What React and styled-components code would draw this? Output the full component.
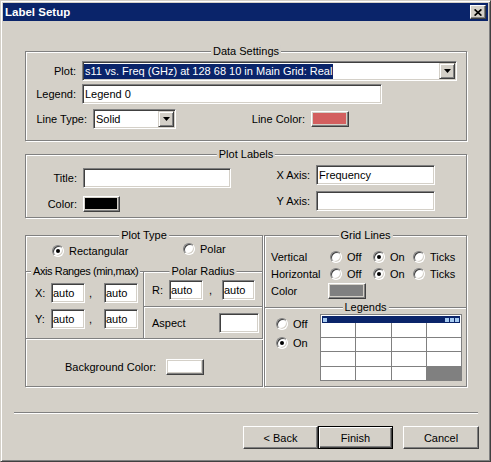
import React from 'react'
import styled, { createGlobalStyle } from 'styled-components'

const GlobalStyle = createGlobalStyle`
    html, body {
        margin: 0;
        padding: 0;
        background: #d4d0c8;
    }
    body {
        font-family: "Liberation Sans", Arial, sans-serif;
        font-size: 11px;
        color: #000;
    }
`

const Window = styled.div`
    width: 491px;
    height: 462px;
    box-sizing: border-box;
    padding: 2px;
    background: #d4d0c8;
    border: 1px solid;
    border-color: #d4d0c8 #404040 #404040 #d4d0c8;
    box-shadow: inset 1px 1px 0 #fff, inset -1px -1px 0 #808080;
    display: flex;
    flex-direction: column;
`
const TitleBar = styled.div`
    height: 18px;
    flex: none;
    display: flex;
    align-items: center;
    padding-left: 2px;
    background: #0a246a;
    color: #fff;
    font-weight: bold;
    font-size: 11.5px;
`
const CloseButton = styled.div`
    margin-left: auto;
    margin-right: 2px;
    width: 16px;
    height: 14px;
    box-sizing: border-box;
    background: #d4d0c8;
    border: 1px solid;
    border-color: #fff #404040 #404040 #fff;
    box-shadow: inset -1px -1px 0 #808080;
    display: flex;
    align-items: center;
    justify-content: center;
`
const Body = styled.div`
    padding: 30px 21px 0 22px;
    display: flex;
    flex-direction: column;
`

// etched frame used by every group box
const Group = styled.div`
    position: relative;
    box-sizing: border-box;
    flex: none;
    border: 1px solid #808080;
    box-shadow: inset 1px 1px 0 #fff, 1px 1px 0 #fff;
`
const GroupTitle = styled.span`
    position: absolute;
    top: -7px;
    left: ${p => p.$left ? '5px' : '50%'};
    transform: ${p => p.$left ? 'none' : 'translateX(-50%)'};
    padding: 0 2px;
    line-height: 13px;
    letter-spacing: ${p => p.$tight ? '-0.4px' : 'normal'};
    background: #d4d0c8;
    white-space: nowrap;
`

const DataBox = styled(Group)`
    height: 90px;
    padding-top: 9px;
    display: flex;
    flex-direction: column;
`
const LabelsBox = styled(Group)`
    height: 64px;
    margin-top: 13px;
    display: flex;
`
const LabelsColumn = styled.div`
    display: flex;
    flex-direction: column;
    gap: 6px;
    width: ${p => p.$w ? p.$w + 'px' : 'auto'};
    padding-top: ${p => p.$pt}px;
`
const BottomSection = styled.div`
    display: flex;
    height: 152px;
    margin-top: 17px;
`
const PlotTypeBox = styled(Group)`
    width: 238px;
    height: 152px;
    display: flex;
    flex-direction: column;
`
const TypeRow = styled.div`
    height: 35px;
    flex: none;
    box-sizing: border-box;
    display: flex;
    align-items: flex-start;
    padding: 8px 0 0 26px;
`
const RangeRow = styled.div`
    display: flex;
    height: 68px;
    flex: none;
    margin: 0 -1px;
`
const AxisBox = styled(Group)`
    width: 119px;
    height: 68px;
    padding: 11px 0 0 9px;
    display: flex;
    flex-direction: column;
    gap: 6px;
`
const RadiusColumn = styled.div`
    flex: 1;
    margin-left: -1px;
    display: flex;
    flex-direction: column;
`
const RadiusBox = styled(Group)`
    height: 36px;
    padding: 8px 0 0 8px;
`
const AspectBox = styled(Group)`
    height: 33px;
    margin-top: -1px;
    padding: 6px 3px 0 8px;
`
const BackgroundRow = styled.div`
    height: 47px;
    flex: none;
    box-sizing: border-box;
    display: flex;
    align-items: center;
    padding: 8px 0 0 39px;
`
const RightColumn = styled.div`
    width: 203px;
    margin-left: 1px;
    display: flex;
    flex-direction: column;
`
const GridLinesBox = styled(Group)`
    height: 73px;
    padding: 12px 0 0 6px;
    display: grid;
    grid-template-columns: 59px 43px 40px auto;
    grid-auto-rows: 17px;
    align-items: center;
    align-content: start;
`
const LegendsBox = styled(Group)`
    height: 80px;
    margin-top: -1px;
    padding: 6px 0 0 11px;
    display: flex;
`
const LegendChoices = styled.div`
    width: 44px;
    display: flex;
    flex-direction: column;
`

const Row = styled.div`
    display: flex;
    align-items: center;
    justify-content: ${p => p.$spread ? 'space-between' : 'flex-start'};
    height: 20px;
    flex: none;
    margin-top: ${p => p.$mt || 0}px;
`
const Label = styled.span`
    flex: none;
    width: ${p => p.$w ? p.$w + 'px' : 'auto'};
    margin-right: ${p => p.$gap ?? 6}px;
    text-align: ${p => p.$alignLeft ? 'left' : 'right'};
    white-space: nowrap;
`
const Comma = styled.span`
    flex: none;
    width: ${p => p.$w}px;
    box-sizing: border-box;
    padding-left: ${p => p.$pl}px;
`
const TextBox = styled.input`
    box-sizing: border-box;
    flex: none;
    width: ${p => p.$w}px;
    height: 20px;
    margin: 0;
    padding: 0 ${p => p.$pad ?? 2}px;
    border: 1px solid;
    border-color: #808080 #fff #fff #808080;
    box-shadow: inset 1px 1px 0 #404040, inset -1px -1px 0 #d4d0c8;
    background: #fff;
    font: 11px "Liberation Sans", Arial, sans-serif;
    color: #000;
    outline: none;
`
const Combo = styled.div`
    box-sizing: border-box;
    flex: none;
    width: ${p => p.$w}px;
    height: 20px;
    display: flex;
    align-items: center;
    padding-left: 1px;
    border: 1px solid;
    border-color: #808080 #fff #fff #808080;
    box-shadow: inset 1px 1px 0 #404040, inset -1px -1px 0 #d4d0c8;
    background: #fff;
    overflow: hidden;
`
const ComboText = styled.span`
    padding: 0 1px;
    line-height: 15px;
    white-space: nowrap;
    background: ${p => p.$selected ? '#0a246a' : 'transparent'};
    color: ${p => p.$selected ? '#fff' : '#000'};
`
const DropButton = styled.span`
    margin-left: auto;
    margin-right: 1px;
    width: 16px;
    height: 16px;
    flex: none;
    box-sizing: border-box;
    display: flex;
    align-items: center;
    justify-content: center;
    background: #d4d0c8;
    border: 1px solid;
    border-color: #d4d0c8 #404040 #404040 #d4d0c8;
    box-shadow: inset 1px 1px 0 #fff, inset -1px -1px 0 #808080;
`
const ColorButton = styled.span`
    display: block;
    flex: none;
    box-sizing: border-box;
    width: ${p => p.$w || 38}px;
    height: 16px;
    margin-left: ${p => p.$ml || 0}px;
    padding: 1px 2px 2px 1px;
    background: #d4d0c8;
    border: 1px solid;
    border-color: #fff #404040 #404040 #fff;
    box-shadow: inset -1px -1px 0 #808080;
`
const Swatch = styled.span`
    display: block;
    height: 100%;
    background: ${p => p.$color};
`
const RadioItem = styled.span`
    display: flex;
    align-items: center;
    flex: none;
    height: ${p => p.$h || 13}px;
    width: ${p => p.$w ? p.$w + 'px' : 'auto'};
    margin-top: ${p => p.$mt || 0}px;
    white-space: nowrap;
`
const RadioCircle = styled.span`
    position: relative;
    flex: none;
    width: 12px;
    height: 12px;
    box-sizing: border-box;
    margin-right: 5px;
    border-radius: 50%;
    background: #fff;
    border: 1px solid;
    border-color: #808080 #fff #fff #808080;
    box-shadow: inset 1px 1px 0 #404040, inset -1px -1px 0 #d4d0c8;
    &::after {
        content: '';
        display: ${p => p.$checked ? 'block' : 'none'};
        position: absolute;
        left: 3px;
        top: 3px;
        width: 4px;
        height: 4px;
        border-radius: 50%;
        background: #000;
    }
`

const Preview = styled.div`
    box-sizing: border-box;
    width: 142px;
    height: 67px;
    border: 1px solid #808080;
    background: #fff;
    display: flex;
    flex-direction: column;
`
const PreviewHeader = styled.div`
    height: 7px;
    flex: none;
    margin: 1px 1px 0;
    padding: 0 1px;
    background: #0a246a;
    display: flex;
    align-items: center;
    gap: 1px;
`
const HeaderDot = styled.span`
    width: 4px;
    height: 4px;
    background: #a6caf0;
    &:first-child {
        margin-right: auto;
    }
`
const PreviewGrid = styled.div`
    flex: 1;
    display: grid;
    grid-template-columns: repeat(4, 1fr);
    grid-template-rows: repeat(4, 1fr);
    gap: 1px;
    background: #808080;
`
const Cell = styled.span`
    background: ${p => p.$active ? '#808080' : '#fff'};
`

const Footer = styled.div`
    padding: 0 9px 0 11px;
    display: flex;
    flex-direction: column;
`
const Separator = styled.div`
    height: 1px;
    margin: 25px 1px 0 0;
    background: #808080;
    box-shadow: 0 1px 0 #fff;
`
const ButtonRow = styled.div`
    display: flex;
    justify-content: flex-end;
    margin-top: 13px;
`
const PushButton = styled.button`
    box-sizing: border-box;
    width: ${p => p.$w || 75}px;
    height: 23px;
    margin: 0 0 0 ${p => p.$ml || 0}px;
    padding: 0;
    font: 11px "Liberation Sans", Arial, sans-serif;
    color: #000;
    background: #d4d0c8;
    border: 1px solid;
    border-color: ${p => p.$default ? '#000' : '#fff #404040 #404040 #fff'};
    box-shadow: ${p => p.$default
        ? 'inset 1px 1px 0 #fff, inset -1px -1px 0 #404040, inset -2px -2px 0 #808080'
        : 'inset -1px -1px 0 #808080'};
`

const Radio = ({ checked, children, ...rest }) => (
    <RadioItem {...rest}>
        <RadioCircle $checked={checked} />
        {children}
    </RadioItem>
)

const Arrow = () => (
    <svg width="7" height="4" viewBox="0 0 7 4">
        <polygon points="0,0 7,0 3.5,4" fill="#000" />
    </svg>
)

const CloseGlyph = () => (
    <svg width="8" height="7" viewBox="0 0 8 7">
        <path d="M0.6 0.4 L7.4 6.6 M7.4 0.4 L0.6 6.6" stroke="#000" strokeWidth="1.7" fill="none" />
    </svg>
)

const RangePair = ({ label, labelWidth, commaWidth, commaPad, secondWidth }) => (
    <Row>
        <Label $w={labelWidth} $gap={0} $alignLeft>{label}</Label>
        <TextBox $w={34} $pad={1} defaultValue="auto" readOnly />
        <Comma $w={commaWidth} $pl={commaPad}>,</Comma>
        <TextBox $w={secondWidth || 34} $pad={1} defaultValue="auto" readOnly />
    </Row>
)

const App = () => (
    <>
        <GlobalStyle />
        <Window>
            <TitleBar>
                Label Setup
                <CloseButton><CloseGlyph /></CloseButton>
            </TitleBar>
            <Body>
                <DataBox>
                    <GroupTitle>Data Settings</GroupTitle>
                    <Row>
                        <Label $w={50}>Plot:</Label>
                        <Combo $w={375}>
                            <ComboText $selected>s11 vs. Freq (GHz) at 128 68 10 in Main Grid: Real</ComboText>
                            <DropButton><Arrow /></DropButton>
                        </Combo>
                    </Row>
                    <Row $mt={3}>
                        <Label $w={50}>Legend:</Label>
                        <TextBox $w={300} defaultValue="Legend 0" readOnly />
                    </Row>
                    <Row $mt={5}>
                        <Label $w={61}>Line Type:</Label>
                        <Combo $w={83}>
                            <ComboText>Solid</ComboText>
                            <DropButton><Arrow /></DropButton>
                        </Combo>
                        <Label $w={129}>Line Color:</Label>
                        <ColorButton><Swatch $color="#d35f5f" /></ColorButton>
                    </Row>
                </DataBox>

                <LabelsBox>
                    <GroupTitle>Plot Labels</GroupTitle>
                    <LabelsColumn $w={244} $pt={13}>
                        <Row>
                            <Label $w={51}>Title:</Label>
                            <TextBox $w={148} readOnly />
                        </Row>
                        <Row>
                            <Label $w={51}>Color:</Label>
                            <ColorButton $w={37}><Swatch $color="#000" /></ColorButton>
                        </Row>
                    </LabelsColumn>
                    <LabelsColumn $pt={10}>
                        <Row>
                            <Label $w={40}>X Axis:</Label>
                            <TextBox $w={119} defaultValue="Frequency" readOnly />
                        </Row>
                        <Row>
                            <Label $w={40}>Y Axis:</Label>
                            <TextBox $w={119} readOnly />
                        </Row>
                    </LabelsColumn>
                </LabelsBox>

                <BottomSection>
                    <PlotTypeBox>
                        <GroupTitle>Plot Type</GroupTitle>
                        <TypeRow>
                            <Radio checked $w={131}>Rectangular</Radio>
                            <Radio $mt={-2}>Polar</Radio>
                        </TypeRow>
                        <RangeRow>
                            <AxisBox>
                                <GroupTitle $left $tight>Axis Ranges (min,max)</GroupTitle>
                                <RangePair label="X:" labelWidth={16} commaWidth={19} commaPad={4} />
                                <RangePair label="Y:" labelWidth={16} commaWidth={19} commaPad={4} />
                            </AxisBox>
                            <RadiusColumn>
                                <RadiusBox>
                                    <GroupTitle>Polar Radius</GroupTitle>
                                    <RangePair label="R:" labelWidth={17} commaWidth={19} commaPad={6} secondWidth={33} />
                                </RadiusBox>
                                <AspectBox>
                                    <Row $spread>
                                        <Label $gap={0}>Aspect</Label>
                                        <TextBox $w={40} readOnly />
                                    </Row>
                                </AspectBox>
                            </RadiusColumn>
                        </RangeRow>
                        <BackgroundRow>
                            <Label $gap={10}>Background Color:</Label>
                            <ColorButton><Swatch $color="#fff" /></ColorButton>
                        </BackgroundRow>
                    </PlotTypeBox>

                    <RightColumn>
                        <GridLinesBox>
                            <GroupTitle>Grid Lines</GroupTitle>
                            <Label $alignLeft $gap={0}>Vertical</Label>
                            <Radio>Off</Radio>
                            <Radio checked>On</Radio>
                            <Radio>Ticks</Radio>
                            <Label $alignLeft $gap={0}>Horizontal</Label>
                            <Radio>Off</Radio>
                            <Radio checked>On</Radio>
                            <Radio>Ticks</Radio>
                            <Label $alignLeft $gap={0}>Color</Label>
                            <ColorButton $ml={-2}><Swatch $color="#808080" /></ColorButton>
                        </GridLinesBox>
                        <LegendsBox>
                            <GroupTitle>Legends</GroupTitle>
                            <LegendChoices>
                                <Radio $h={19}>Off</Radio>
                                <Radio $h={19} checked>On</Radio>
                            </LegendChoices>
                            <Preview>
                                <PreviewHeader>
                                    <HeaderDot />
                                    <HeaderDot />
                                    <HeaderDot />
                                    <HeaderDot />
                                </PreviewHeader>
                                <PreviewGrid>
                                    {Array.from({ length: 16 }, (_, i) => (
                                        <Cell key={i} $active={i === 15} />
                                    ))}
                                </PreviewGrid>
                            </Preview>
                        </LegendsBox>
                    </RightColumn>
                </BottomSection>
            </Body>

            <Footer>
                <Separator />
                <ButtonRow>
                    <PushButton>&lt; Back</PushButton>
                    <PushButton $default>Finish</PushButton>
                    <PushButton $w={76} $ml={10}>Cancel</PushButton>
                </ButtonRow>
            </Footer>
        </Window>
    </>
)

export default App
